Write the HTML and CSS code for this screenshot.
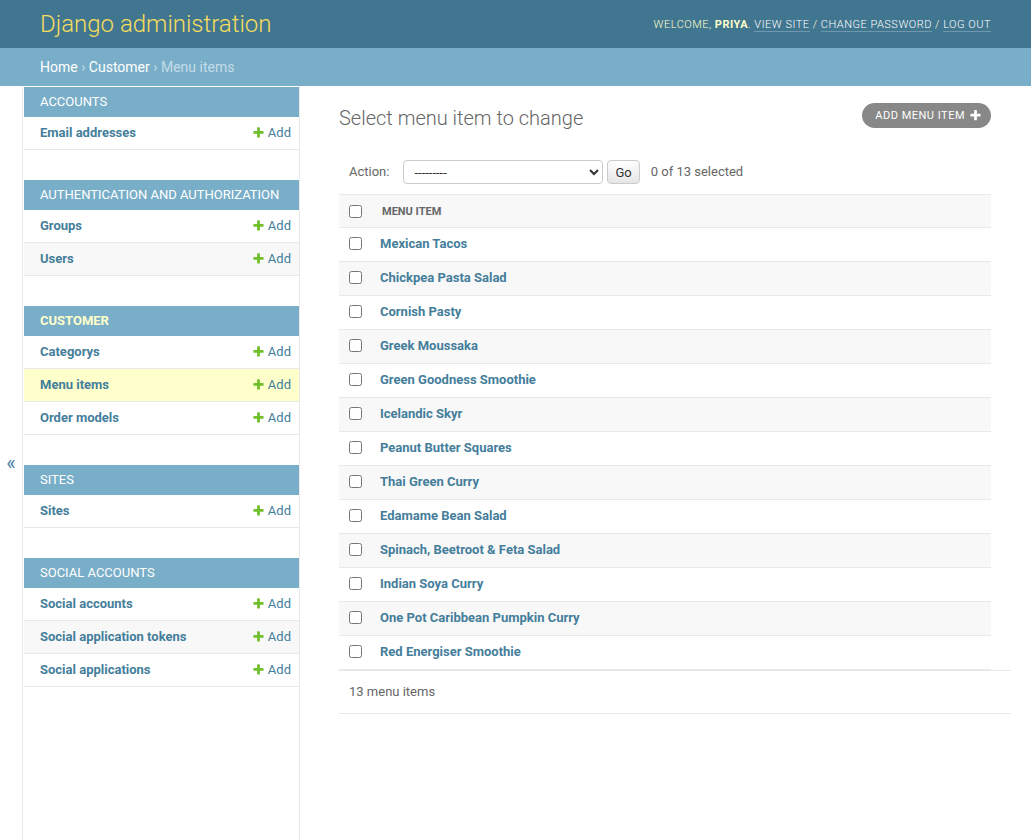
FILE: index.html
```html
<!DOCTYPE html>
<html lang="en">
<head>
<meta charset="utf-8">
<title>Select menu item to change | Django site admin</title>
<link rel="stylesheet" href="styles.css">
</head>
<body>
<div id="container">
  <header id="header">
    <h1 id="site-name"><a href="#">Django administration</a></h1>
    <div id="user-tools">Welcome, <strong>priya</strong>. <a href="#">View site</a> / <a href="#">Change password</a> / <a href="#">Log out</a></div>
  </header>
  <nav class="breadcrumbs"><a href="#">Home</a> &rsaquo; <a href="#">Customer</a> &rsaquo; Menu items</nav>
  <div class="main">
    <button class="toggle-nav-sidebar" type="button">&laquo;</button>
    <nav id="nav-sidebar">
      <div class="module">
        <table>
          <caption><a class="section" href="#">Accounts</a></caption>
          <tr><th><a href="#">Email addresses</a></th><td><a class="addlink" href="#"><svg width="13" height="13" viewBox="0 0 1792 1792"><path fill="#70bf2b" d="M1600 796v192q0 40-28 68t-68 28h-416v416q0 40-28 68t-68 28h-192q-40 0-68-28t-28-68v-416h-416q-40 0-68-28t-28-68v-192q0-40 28-68t68-28h416v-416q0-40 28-68t68-28h192q40 0 68 28t28 68v416h416q40 0 68 28t28 68z"/></svg>Add</a></td></tr>
        </table>
      </div>
      <div class="module">
        <table>
          <caption><a class="section" href="#">Authentication and Authorization</a></caption>
          <tr><th><a href="#">Groups</a></th><td><a class="addlink" href="#"><svg width="13" height="13" viewBox="0 0 1792 1792"><path fill="#70bf2b" d="M1600 796v192q0 40-28 68t-68 28h-416v416q0 40-28 68t-68 28h-192q-40 0-68-28t-28-68v-416h-416q-40 0-68-28t-28-68v-192q0-40 28-68t68-28h416v-416q0-40 28-68t68-28h192q40 0 68 28t28 68v416h416q40 0 68 28t28 68z"/></svg>Add</a></td></tr>
          <tr><th><a href="#">Users</a></th><td><a class="addlink" href="#"><svg width="13" height="13" viewBox="0 0 1792 1792"><path fill="#70bf2b" d="M1600 796v192q0 40-28 68t-68 28h-416v416q0 40-28 68t-68 28h-192q-40 0-68-28t-28-68v-416h-416q-40 0-68-28t-28-68v-192q0-40 28-68t68-28h416v-416q0-40 28-68t68-28h192q40 0 68 28t28 68v416h416q40 0 68 28t28 68z"/></svg>Add</a></td></tr>
        </table>
      </div>
      <div class="module current-app">
        <table>
          <caption><a class="section" href="#">Customer</a></caption>
          <tr><th><a href="#">Categorys</a></th><td><a class="addlink" href="#"><svg width="13" height="13" viewBox="0 0 1792 1792"><path fill="#70bf2b" d="M1600 796v192q0 40-28 68t-68 28h-416v416q0 40-28 68t-68 28h-192q-40 0-68-28t-28-68v-416h-416q-40 0-68-28t-28-68v-192q0-40 28-68t68-28h416v-416q0-40 28-68t68-28h192q40 0 68 28t28 68v416h416q40 0 68 28t28 68z"/></svg>Add</a></td></tr>
          <tr class="current-model"><th><a href="#">Menu items</a></th><td><a class="addlink" href="#"><svg width="13" height="13" viewBox="0 0 1792 1792"><path fill="#70bf2b" d="M1600 796v192q0 40-28 68t-68 28h-416v416q0 40-28 68t-68 28h-192q-40 0-68-28t-28-68v-416h-416q-40 0-68-28t-28-68v-192q0-40 28-68t68-28h416v-416q0-40 28-68t68-28h192q40 0 68 28t28 68v416h416q40 0 68 28t28 68z"/></svg>Add</a></td></tr>
          <tr><th><a href="#">Order models</a></th><td><a class="addlink" href="#"><svg width="13" height="13" viewBox="0 0 1792 1792"><path fill="#70bf2b" d="M1600 796v192q0 40-28 68t-68 28h-416v416q0 40-28 68t-68 28h-192q-40 0-68-28t-28-68v-416h-416q-40 0-68-28t-28-68v-192q0-40 28-68t68-28h416v-416q0-40 28-68t68-28h192q40 0 68 28t28 68v416h416q40 0 68 28t28 68z"/></svg>Add</a></td></tr>
        </table>
      </div>
      <div class="module">
        <table>
          <caption><a class="section" href="#">Sites</a></caption>
          <tr><th><a href="#">Sites</a></th><td><a class="addlink" href="#"><svg width="13" height="13" viewBox="0 0 1792 1792"><path fill="#70bf2b" d="M1600 796v192q0 40-28 68t-68 28h-416v416q0 40-28 68t-68 28h-192q-40 0-68-28t-28-68v-416h-416q-40 0-68-28t-28-68v-192q0-40 28-68t68-28h416v-416q0-40 28-68t68-28h192q40 0 68 28t28 68v416h416q40 0 68 28t28 68z"/></svg>Add</a></td></tr>
        </table>
      </div>
      <div class="module">
        <table>
          <caption><a class="section" href="#">Social Accounts</a></caption>
          <tr><th><a href="#">Social accounts</a></th><td><a class="addlink" href="#"><svg width="13" height="13" viewBox="0 0 1792 1792"><path fill="#70bf2b" d="M1600 796v192q0 40-28 68t-68 28h-416v416q0 40-28 68t-68 28h-192q-40 0-68-28t-28-68v-416h-416q-40 0-68-28t-28-68v-192q0-40 28-68t68-28h416v-416q0-40 28-68t68-28h192q40 0 68 28t28 68v416h416q40 0 68 28t28 68z"/></svg>Add</a></td></tr>
          <tr><th><a href="#">Social application tokens</a></th><td><a class="addlink" href="#"><svg width="13" height="13" viewBox="0 0 1792 1792"><path fill="#70bf2b" d="M1600 796v192q0 40-28 68t-68 28h-416v416q0 40-28 68t-68 28h-192q-40 0-68-28t-28-68v-416h-416q-40 0-68-28t-28-68v-192q0-40 28-68t68-28h416v-416q0-40 28-68t68-28h192q40 0 68 28t28 68v416h416q40 0 68 28t28 68z"/></svg>Add</a></td></tr>
          <tr><th><a href="#">Social applications</a></th><td><a class="addlink" href="#"><svg width="13" height="13" viewBox="0 0 1792 1792"><path fill="#70bf2b" d="M1600 796v192q0 40-28 68t-68 28h-416v416q0 40-28 68t-68 28h-192q-40 0-68-28t-28-68v-416h-416q-40 0-68-28t-28-68v-192q0-40 28-68t68-28h416v-416q0-40 28-68t68-28h192q40 0 68 28t28 68v416h416q40 0 68 28t28 68z"/></svg>Add</a></td></tr>
        </table>
      </div>
    </nav>
    <div class="content">
      <div class="content-head">
        <h1>Select menu item to change</h1>
        <ul class="object-tools">
          <li><a class="addlink-tool" href="#">Add menu item<svg width="13" height="13" viewBox="0 0 1792 1792"><path fill="#fff" d="M1600 736v192q0 40-28 68t-68 28h-416v416q0 40-28 68t-68 28h-192q-40 0-68-28t-28-68v-416h-416q-40 0-68-28t-28-68v-192q0-40 28-68t68-28h416v-416q0-40 28-68t68-28h192q40 0 68 28t28 68v416h416q40 0 68 28t28 68z"/></svg></a></li>
        </ul>
      </div>
      <div id="changelist">
        <div class="actions">
          <label class="action-label">Action:</label>
          <select name="action">
            <option selected>---------</option>
            <option>Delete selected menu items</option>
          </select>
          <button class="button" type="button">Go</button>
          <span class="action-counter">0 of 13 selected</span>
        </div>
        <table id="result_list">
          <thead>
            <tr>
              <th class="action-checkbox"><input type="checkbox"></th>
              <th class="column-name"><span class="text">Menu item</span></th>
            </tr>
          </thead>
          <tbody>
            <tr><td class="action-checkbox"><input type="checkbox"></td><th class="field-name"><a href="#">Mexican Tacos</a></th></tr>
            <tr><td class="action-checkbox"><input type="checkbox"></td><th class="field-name"><a href="#">Chickpea Pasta Salad</a></th></tr>
            <tr><td class="action-checkbox"><input type="checkbox"></td><th class="field-name"><a href="#">Cornish Pasty</a></th></tr>
            <tr><td class="action-checkbox"><input type="checkbox"></td><th class="field-name"><a href="#">Greek Moussaka</a></th></tr>
            <tr><td class="action-checkbox"><input type="checkbox"></td><th class="field-name"><a href="#">Green Goodness Smoothie</a></th></tr>
            <tr><td class="action-checkbox"><input type="checkbox"></td><th class="field-name"><a href="#">Icelandic Skyr</a></th></tr>
            <tr><td class="action-checkbox"><input type="checkbox"></td><th class="field-name"><a href="#">Peanut Butter Squares</a></th></tr>
            <tr><td class="action-checkbox"><input type="checkbox"></td><th class="field-name"><a href="#">Thai Green Curry</a></th></tr>
            <tr><td class="action-checkbox"><input type="checkbox"></td><th class="field-name"><a href="#">Edamame Bean Salad</a></th></tr>
            <tr><td class="action-checkbox"><input type="checkbox"></td><th class="field-name"><a href="#">Spinach, Beetroot &amp; Feta Salad</a></th></tr>
            <tr><td class="action-checkbox"><input type="checkbox"></td><th class="field-name"><a href="#">Indian Soya Curry</a></th></tr>
            <tr><td class="action-checkbox"><input type="checkbox"></td><th class="field-name"><a href="#">One Pot Caribbean Pumpkin Curry</a></th></tr>
            <tr><td class="action-checkbox"><input type="checkbox"></td><th class="field-name"><a href="#">Red Energiser Smoothie</a></th></tr>
          </tbody>
        </table>
        <p class="paginator">13 menu items</p>
      </div>
    </div>
  </div>
</div>
</body>
</html>
```

FILE: styles.css
```css
html, body {
  height: 100%;
}

body {
  margin: 0;
  font-family: Roboto, "Liberation Sans", "DejaVu Sans", sans-serif;
  font-size: 14px;
  color: #333;
  background: #fff;
}

a {
  color: #447e9b;
  text-decoration: none;
}

#container {
  min-height: 100%;
  display: flex;
  flex-direction: column;
}

/* Header */
#header {
  display: flex;
  justify-content: space-between;
  align-items: center;
  height: 48px;
  padding: 10px 40px;
  box-sizing: border-box;
  background: #417690;
  color: #ffc;
}

#site-name {
  margin: 0;
  font-size: 24px;
  font-weight: 300;
  line-height: 28px;
}

#site-name a {
  color: #f5dd5d;
}

#user-tools {
  font-size: 11px;
  font-weight: 300;
  letter-spacing: 0.5px;
  text-transform: uppercase;
  color: #ffc;
  padding-top: 1px;
}

#user-tools strong {
  font-weight: 700;
}

#user-tools a {
  color: #fff;
  border-bottom: 1px solid rgba(255, 255, 255, 0.25);
}

/* Breadcrumbs */
.breadcrumbs {
  background: #79aec8;
  padding: 10px 40px;
  color: #c4dce8;
  font-size: 14px;
  line-height: 18px;
}

.breadcrumbs a {
  color: #fff;
}

/* Main */
.main {
  flex: 1 0 auto;
  display: flex;
}

.toggle-nav-sidebar {
  flex: 0 0 23px;
  width: 23px;
  border: 0;
  border-right: 1px solid #eaeaea;
  background: #fff;
  color: #447e9b;
  font-family: inherit;
  font-size: 20px;
  padding: 0;
  display: flex;
  align-items: center;
  justify-content: center;
}

#nav-sidebar {
  flex: 0 0 277px;
  box-sizing: border-box;
  border-top: 1px solid transparent;
  border-right: 1px solid #eaeaea;
  padding-left: 1px;
}

.module {
  margin-bottom: 30px;
}

.module table {
  width: 100%;
  border-collapse: separate;
  border-spacing: 0;
}

.module caption {
  background: #79aec8;
  padding: 8px 8px 8px 16px;
  font-size: 13px;
  line-height: 14px;
  text-align: left;
  text-transform: uppercase;
}

.module caption a {
  color: #fff;
}

.module.current-app caption a {
  color: #ffc;
  font-weight: 700;
}

.module th {
  width: 100%;
  text-align: left;
  padding: 8px 8px 8px 16px;
  font-size: 13px;
  line-height: 16px;
  font-weight: 700;
  border-bottom: 1px solid #e8e8e8;
}

.module td {
  padding: 8px;
  font-size: 13px;
  line-height: 16px;
  white-space: nowrap;
  text-align: right;
  border-bottom: 1px solid #e8e8e8;
}

.module tr:nth-child(even) {
  background: #f8f8f8;
}

.module tr.current-model {
  background: #ffc;
}

.addlink svg {
  vertical-align: -2px;
  margin-right: 3px;
}

/* Content */
.content {
  flex: 1;
  min-width: 0;
  padding: 20px 40px 20px 39px;
}

.content-head {
  display: flex;
  justify-content: space-between;
  align-items: flex-start;
  margin-bottom: 20px;
}

.content-head h1 {
  margin: 0;
  font-size: 20px;
  font-weight: 300;
  line-height: 24px;
  color: #666;
}

.object-tools {
  list-style: none;
  margin: -3px 0 0;
  padding: 0;
}

.addlink-tool {
  display: flex;
  align-items: center;
  gap: 4px;
  background: #888;
  color: #fff;
  font-size: 11px;
  line-height: 13px;
  letter-spacing: 0.5px;
  text-transform: uppercase;
  border-radius: 15px;
  padding: 6px 9px 6px 13px;
}

/* Actions */
.actions {
  display: flex;
  align-items: center;
  padding: 10px;
  line-height: 24px;
  font-size: 13px;
  color: #666;
}

.actions select {
  margin-left: 14px;
  width: 200px;
  height: 24px;
  font-family: inherit;
  font-size: 13px;
  color: #333;
  background: #fff;
  border: 1px solid #ccc;
  border-radius: 4px;
  padding: 0 0 0 6px;
}

.actions .button {
  margin-left: 4px;
  height: 24px;
  padding: 0 7px;
  font-family: inherit;
  font-size: 13px;
  color: #333;
  background: #fff;
  border: 1px solid #ccc;
  border-radius: 4px;
  box-shadow: 0 -15px 20px -10px rgba(0, 0, 0, 0.15) inset;
}

.action-counter {
  margin-left: 11px;
}

/* Result list */
#result_list {
  width: 100%;
  border-collapse: separate;
  border-spacing: 0;
}

#result_list thead th {
  background: #f8f8f8;
  border-top: 1px solid #e8e8e8;
  border-bottom: 1px solid #e8e8e8;
  padding: 0;
  font-size: 11px;
  font-weight: 700;
  color: #666;
  text-align: left;
  vertical-align: middle;
  text-transform: uppercase;
}

#result_list thead th .text {
  display: block;
  padding: 9px 10px 7px;
  line-height: 16px;
}

#result_list .action-checkbox {
  width: 13px;
  padding: 0 10px;
  vertical-align: middle;
}

#result_list tbody td.action-checkbox {
  vertical-align: top;
  padding-top: 9px;
}

#result_list input[type="checkbox"] {
  display: block;
  margin: 0;
  width: 13px;
  height: 13px;
}

#result_list tbody td,
#result_list tbody th {
  border-bottom: 1px solid #e8e8e8;
  font-size: 13px;
  line-height: 17px;
}

#result_list tbody th {
  padding: 7px 8px 9px;
  text-align: left;
  font-weight: 700;
}

#result_list tbody tr:nth-child(even) {
  background: #f8f8f8;
}

.paginator {
  margin: 0 -20px 0 0;
  padding: 10px;
  font-size: 13px;
  line-height: 22px;
  color: #666;
  border-top: 1px solid #e8e8e8;
  border-bottom: 1px solid #e8e8e8;
}
```
